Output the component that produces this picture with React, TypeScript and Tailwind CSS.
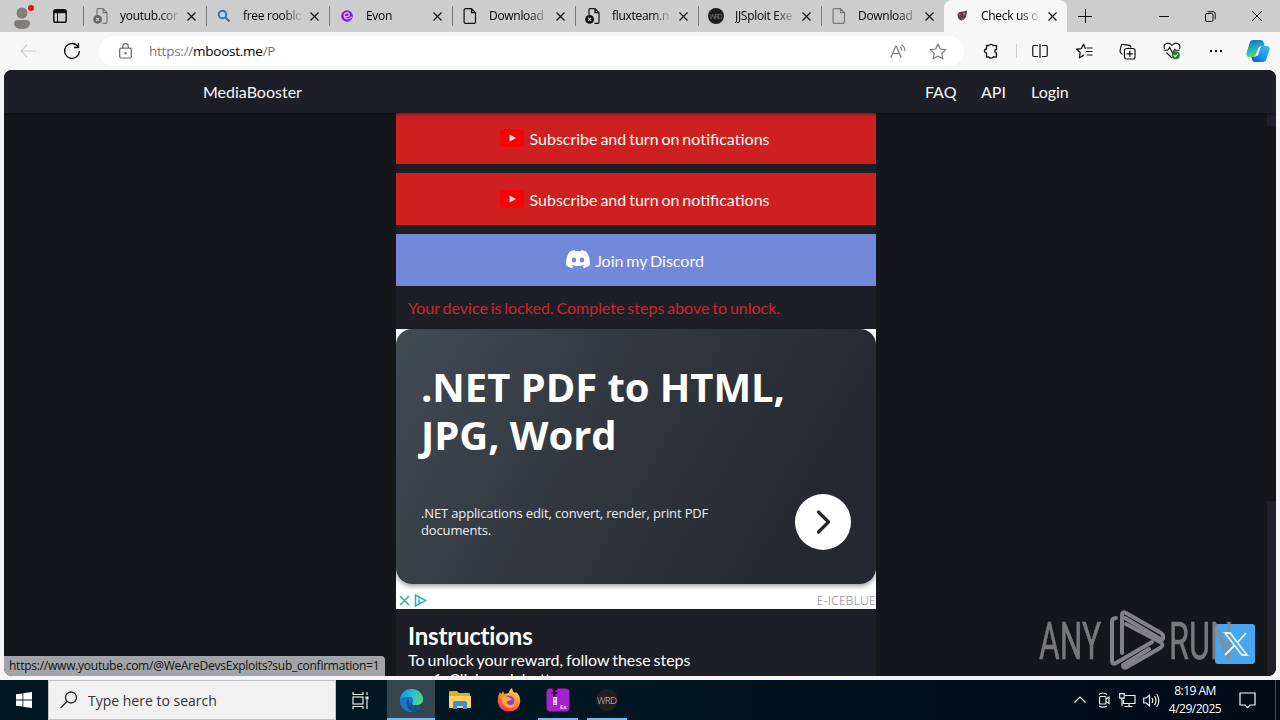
import type { ReactNode } from "react";
import clsx from "clsx";

type TabProps = {
  title: string;
  icon: ReactNode;
  active?: boolean;
};

function PageIcon({ muted, badge }: { muted?: boolean; badge?: boolean }) {
  return (
    <svg
      width="16"
      height="16"
      viewBox="0 0 16 16"
      fill="none"
      stroke={muted ? "#777" : "#111"}
      strokeWidth="1.2"
    >
      <path
        d={
          badge
            ? "M4 7V1.8Q4 .7 5 .7h5l4 4v9q0 1.6-1.3 1.6H9.5M10 .7v4h4"
            : "M4 .7h5.5l4 4v9q0 1.6-1.3 1.6H3.4q-1.3 0-1.3-1.3V2Q2.1.7 4 .7zM9.5.7v4h4"
        }
      />
      {badge && (
        <>
          <circle cx="4.6" cy="11.4" r="4.4" fill={muted ? "#666" : "#111"} stroke="none" />
          <path d="m3.1 9.9 3 3m0-3-3 3" stroke="#ccc" />
        </>
      )}
    </svg>
  );
}

function CloseIcon({ className }: { className?: string }) {
  return (
    <svg
      className={clsx("shrink-0", className)}
      width="9"
      height="9"
      viewBox="0 0 9 9"
      stroke="#111"
      strokeWidth="1.2"
    >
      <path d="m.5.5 8 8m0-8-8 8" />
    </svg>
  );
}

function SearchFavicon() {
  return (
    <svg width="16" height="16" viewBox="0 0 16 16" fill="none" stroke="#2474c8">
      <circle cx="6.5" cy="6.5" r="3.8" strokeWidth="1.9" />
      <path d="m9.5 9.5 4 4" strokeWidth="2.3" />
    </svg>
  );
}

function EvonFavicon() {
  return (
    <svg width="16" height="16" viewBox="0 0 16 16" fill="none">
      <circle cx="8" cy="8" r="5.8" fill="#8e16e0" />
      <path d="M5.2 8q2.400 1.500 5.200-.6Q10.500 4.800 8 4.700 5 5 5.200 8q.4 3 3.300 3 2.500 0 4.300-2.500" stroke="#dcbcf0" strokeWidth="1.2" />
    </svg>
  );
}

function WrdFavicon() {
  return (
    <svg width="16" height="16" viewBox="0 0 16 16">
      <circle cx="8" cy="8" r="8" fill="#1d1d1d" />
      <text x="1.5" y="10.6" textLength="13" fontSize="7" fill="#777" fontFamily="Open Sans, sans-serif">
        WRD
      </text>
    </svg>
  );
}

function BoostFavicon() {
  return (
    <svg width="16" height="16" viewBox="0 0 16 16">
      <path d="M3.500 6Q5 3 9 3.500L13 2.500l-.5 4Q12 11 8 12.500 3.500 12 3.500 6z" fill="#4b4650" />
      <path d="m4 5 3 1.500-2 1.500zM7 9l3 2-2.500 1.500z" fill="#c83a4d" />
      <path d="m9 5.500 2-1-1 3z" fill="#b9b4bd" />
    </svg>
  );
}

const tabs: TabProps[] = [
  { title: "youtub.cor", icon: <PageIcon muted badge /> },
  { title: "free rooblo", icon: <SearchFavicon /> },
  { title: "Evon", icon: <EvonFavicon /> },
  { title: "Download", icon: <PageIcon /> },
  { title: "fluxteam.n", icon: <PageIcon badge /> },
  { title: "JJSploit Exe", icon: <WrdFavicon /> },
  { title: "Download", icon: <PageIcon muted /> },
  { title: "Check us o", icon: <BoostFavicon />, active: true },
];

function Tab({ title, icon, active }: TabProps) {
  return (
    <div
      className={clsx(
        "flex h-8 w-[123px] shrink-0 items-center pl-[10px]",
        active
          ? "rounded-t-lg bg-[#f7f7f7]"
          : "bg-[linear-gradient(#777,#777)] bg-[length:1px_20px] bg-[position:0_6px] bg-no-repeat",
      )}
    >
      <span className="size-4 shrink-0">{icon}</span>
      <span className="ml-[11px] w-[58px] text-[12px] leading-4 tracking-[-0.3px] whitespace-nowrap text-black [mask-image:linear-gradient(90deg,#000_68%,#0003_98%)]">
        {title}
      </span>
      <CloseIcon className="ml-[9px]" />
    </div>
  );
}

function TabStrip() {
  return (
    <div className="flex h-8 items-center bg-[#cdcdcd]">
      <svg className="ml-3 shrink-0" width="24" height="26" viewBox="0 0 24 26">
        <circle cx="10" cy="10" r="5.5" fill="#817d7b" />
        <path d="M2 21q0-4 4-4h8q4 0 4 4-1 5-8 5t-8-5z" fill="#817d7b" />
        <circle cx="19" cy="5" r="3" fill="#e3101c" />
      </svg>
      <svg className="ml-[17px] shrink-0" width="14" height="14" viewBox="0 0 14 14">
        <rect x=".8" y=".8" width="12.4" height="12.4" rx="1.8" fill="none" stroke="#111" strokeWidth="1.5" />
        <path d="M1 1h12v3.2H1z" fill="#111" />
        <path d="M4.5 4v9" stroke="#111" />
      </svg>
      <div className="ml-4 flex">
        {tabs.map((tab, i) => (
          <Tab key={i} {...tab} />
        ))}
      </div>
      <svg className="ml-[11px] shrink-0" width="14" height="14" viewBox="0 0 14 14" stroke="#111">
        <path d="M7.5 0v14M0 7.5h14" />
      </svg>
      <div className="ml-auto flex items-center gap-9 pr-[18px]">
        <svg width="10" height="10" stroke="#111">
          <path d="M0 5.5h10" />
        </svg>
        <svg width="11" height="11" viewBox="0 0 11 11" fill="none" stroke="#111">
          <rect x=".5" y="2.5" width="7.5" height="8" rx="1.5" />
          <path d="M2.5.7h5.7q2 0 2 2v5.6" />
        </svg>
        <svg width="10" height="10" stroke="#111">
          <path d="m0 0 10 10M10 0 0 10" />
        </svg>
      </div>
    </div>
  );
}

function CopilotIcon() {
  return (
    <svg className="shrink-0" width="24" height="24" viewBox="0 0 24 24">
      <defs>
        <linearGradient id="cop-a" x1="0" y1="0" x2="0.3" y2="1">
          <stop offset="0" stopColor="#1267c8" />
          <stop offset=".5" stopColor="#1fa9c4" />
          <stop offset="1" stopColor="#5bd672" />
        </linearGradient>
        <linearGradient id="cop-b" x1="1" y1="0" x2="0" y2="1">
          <stop offset="0" stopColor="#45b6f4" />
          <stop offset=".6" stopColor="#168fe8" />
          <stop offset="1" stopColor="#0b50c8" />
        </linearGradient>
      </defs>
      <path d="M7 1h8q2.2 0 3 3l.6 3H16q-2.5 0-3.4 3l-1.5 5Q10 18 7 18H4q-4.5 0-3.3-4.5L3.5 4Q4.5 1 7 1z" fill="url(#cop-a)" />
      <path d="M17 23H9q-2.2 0-3-2.5L5.4 18H8q2.5 0 3.4-3l1.5-5Q14 7 17 7h3q4.5 0 3.4 4l-2.9 9Q19.5 23 17 23z" fill="url(#cop-b)" />
      <path d="m12.7 8.5 2.2-.9-2.9 8.7-2.7 1z" fill="#f4fbff" />
    </svg>
  );
}

function Toolbar() {
  return (
    <div className="flex h-[38px] items-center bg-[#f7f7f7]">
      <svg className="ml-5 shrink-0" width="16" height="14" viewBox="0 0 16 14" fill="none" stroke="#ccc" strokeWidth="1.2">
        <path d="M16 7H1m6-6L1 7l6 6" />
      </svg>
      <svg className="ml-[27px] shrink-0" width="18" height="18" viewBox="0 0 18 18" fill="none" stroke="#111" strokeWidth="1.3">
        <path d="M15.3 5A7.4 7.4 0 1 0 16.4 9M15.5 1v4.5H11" />
      </svg>
      <div className="ml-[18px] flex h-[30px] w-[865px] shrink-0 items-center rounded-full bg-white">
        <svg className="ml-[20px]" width="13" height="16" viewBox="0 0 13 16" fill="none" stroke="#666" strokeWidth="1.2">
          <rect x=".7" y="5.2" width="11.6" height="9.8" rx="1.5" />
          <path d="M3.7 5V3.5a2.8 2.8 0 0 1 5.6 0V5" />
          <circle cx="6.5" cy="10.2" r=".6" fill="#666" />
        </svg>
        <span className="ml-[17px] text-[13.5px] tracking-[-0.25px] text-[#777]">
          https://<span className="text-black">mboost.me</span>/P
        </span>
        <svg className="ml-auto" width="16" height="15" viewBox="0 0 16 15" fill="none" stroke="#777" strokeWidth="1.1">
          <path d="M.7 14 5.7 2h.6l5 12M2.500 9.500h7M10 3q2 1 2 3.500M11.500.7Q15 2.500 14.800 7" />
        </svg>
        <svg className="mr-[17px] ml-[23px]" width="18" height="17" viewBox="0 0 18 17" fill="none" stroke="#777" strokeWidth="1.2" strokeLinejoin="round">
          <path d="m9 1 2.3 5 5.5.6-4 3.8 1 5.4L9 13.1l-4.8 2.7 1-5.4-4-3.8 5.5-.6z" />
        </svg>
      </div>
      <svg className="ml-[19px] shrink-0" width="16" height="16" viewBox="0 0 16 16" fill="none" stroke="#111" strokeWidth="1.3" strokeLinejoin="round">
        <path d="M3.500 2.500H6a2.200 2 0 0 1 4 0h3.500v4a1.700 1.700 0 0 0 0 3.500v4H10a2.200 2 0 0 1-4 0H3.500v-4a2 2 0 1 1 0-4z" />
      </svg>
      <div className="ml-[17px] h-[14px] w-px shrink-0 bg-[#ccc]" />
      <svg className="ml-[15px] shrink-0" width="16" height="14" viewBox="0 0 16 14" fill="none" stroke="#111" strokeWidth="1.2">
        <path d="M6 1.500H2q-1.200 0-1.200 1.200v8.600Q.8 12.500 2 12.500h4m4-11h4q1.200 0 1.200 1.200v8.600q0 1.200-1.200 1.200h-4M8 0v14" />
      </svg>
      <svg className="ml-[28px] shrink-0" width="17" height="16" viewBox="0 0 17 16" fill="none" stroke="#111" strokeWidth="1.2" strokeLinejoin="round">
        <path d="M9.500 6 7.500 1.200 5.200 5.600.7 6.200 4.200 9.500l-.8 5.300L8 12M10.500 5h6M10 8.500h6.500M11 12h5.500" />
      </svg>
      <svg className="ml-[26px] shrink-0" width="17" height="17" viewBox="0 0 17 17" fill="none" stroke="#111" strokeWidth="1.2">
        <path d="M3.500 11.500Q1 10 1 8L2 3q.4-1.800 2.200-1.600l6.300 1q1.500.4 1.500 2" />
        <rect x="5.5" y="5.5" width="10.5" height="10.5" rx="2" />
        <path d="M10.800 7.800v6M7.800 10.800h6" />
      </svg>
      <svg className="ml-[27px] shrink-0" width="18" height="18" viewBox="0 0 18 18" fill="none" stroke="#111" strokeWidth="1.1">
        <path d="M1.500 7C-.5 1 6-.7 9 3.500 12-.7 18.500 1 16.500 7M3.500 10.500 9 16M.7 8.300h4l2-3 3 6 2-4 1 1h4" />
        <circle cx="12.8" cy="13.2" r="4" fill="#238020" stroke="none" />
        <path d="m10.800 13.200 1.400 1.400 2.800-2.800" stroke="#fff" />
      </svg>
      <svg className="ml-[28px] shrink-0" width="14" height="4" viewBox="0 0 14 4" fill="#111">
        <circle cx="2" cy="2" r="1.2" />
        <circle cx="7" cy="2" r="1.2" />
        <circle cx="12" cy="2" r="1.2" />
      </svg>
      <div className="ml-[23px]">
        <CopilotIcon />
      </div>
    </div>
  );
}

function SiteNav() {
  return (
    <nav className="relative flex h-[43px] shrink-0 items-center bg-[#1e1f26] pl-[199px] text-[#f6f6f7] shadow-[0_1px_3px_#0007]">
      <span className="w-[722px]">MediaBooster</span>
      <span className="w-14">FAQ</span>
      <span className="w-[50px]">API</span>
      <span>Login</span>
    </nav>
  );
}

function YoutubeLogo() {
  return (
    <svg width="24" height="18" viewBox="0 0 24 18">
      <rect width="24" height="18" rx="4" fill="#fb0007" />
      <path d="m9.500 5.500 6.500 3.500-6.500 3.500z" fill="#ffe9e6" />
    </svg>
  );
}

function DiscordLogo() {
  return (
    <svg width="24" height="19" viewBox="0 0 24 19" fill="#fff">
      <path
        fillRule="evenodd"
        d="M20.300 1.600A20 20 0 0 0 15.400 0l-.7 1.300a18 18 0 0 0-5.400 0L8.600 0a20 20 0 0 0-4.900 1.600C.6 6.200-.3 10.700.1 15.200a20 20 0 0 0 6 3.100l1.300-2.100-2-1 .5-.4c3.900 1.900 8.200 1.900 12.100 0l.5.4-2 1 1.300 2.100a20 20 0 0 0 6-3.100c.6-5.200-.8-9.700-3.500-13.600zM8 12.500c-1.200 0-2.200-1.100-2.200-2.500S6.800 7.600 8 7.600s2.200 1.100 2.200 2.400S9.200 12.500 8 12.500zm8 0c-1.200 0-2.200-1.100-2.200-2.500S14.800 7.600 16 7.600s2.200 1.100 2.200 2.400-1 2.500-2.200 2.500z"
      />
    </svg>
  );
}

type StepProps = {
  label: string;
  icon: ReactNode;
  className: string;
};

function StepButton({ label, icon, className }: StepProps) {
  return (
    <button
      type="button"
      className={clsx(
        "flex w-full shrink-0 items-center justify-center gap-[5px] pt-[1px] pr-[2px] text-[#fff8f2] [word-spacing:-1.2px]",
        className,
      )}
    >
      <span className="mb-[2px]">{icon}</span>
      <span>{label}</span>
    </button>
  );
}

function AdCard() {
  return (
    <div className="h-[280px] shrink-0 bg-white font-['Open_Sans',sans-serif]">
      <div className="h-[255px] rounded-2xl bg-[linear-gradient(120deg,#424a54_0%,#33383f_40%,#25282e_85%)] pt-[34px] pr-[25px] pl-[25px] text-white shadow-[0_2px_5px_#0006]">
        <h2 className="text-[40px] leading-[48px] font-bold tracking-[-0.06px] whitespace-nowrap">
          .NET PDF to HTML,
          <br />
          JPG, Word
        </h2>
        <div className="mt-[35px] flex items-center justify-between">
          <p className="w-[310px] text-[13px] leading-[17px] tracking-[-0.14px] text-[#eceef0]">
            .NET applications edit, convert, render, print PDF documents.
          </p>
          <div className="flex size-14 items-center justify-center rounded-full bg-white">
            <svg width="16" height="24" viewBox="0 0 16 24" fill="none" stroke="#22262a" strokeWidth="3.2" strokeLinecap="round" strokeLinejoin="round">
              <path d="m3.500 2 10 10-10 10" />
            </svg>
          </div>
        </div>
      </div>
      <div className="flex h-[25px] items-end pl-[3px]">
        <svg className="mb-[2px]" width="30" height="13" viewBox="0 0 30 13" fill="none" stroke="#22b2bd" strokeWidth="1.5">
          <path d="m1 2 9 9m0-9-9 9M16.500 1v11l10-5.500zM20 5.500v3.500M20 3.500v1" />
        </svg>
        <span className="ml-auto text-[12px] leading-[17px] font-light tracking-[0.3px] text-[#777]">
          E-ICEBLUE
        </span>
      </div>
    </div>
  );
}

function Watermark() {
  return (
    <svg
      className="absolute right-[20px] bottom-[4px]"
      width="220"
      height="64"
      viewBox="0 0 220 64"
      fill="none"
    >
      <rect x="179" y="16" width="40" height="40" rx="3" fill="#49a5ed" />
      <g
        fill="#8b8b8f"
        stroke="#8b8b8f"
        strokeWidth=".6"
        fontFamily="Roboto, sans-serif"
        fontSize="52"
        opacity=".85"
      >
        <text x="3" y="51" textLength="62" lengthAdjust="spacingAndGlyphs">
          ANY
        </text>
        <text x="133" y="51" textLength="64" lengthAdjust="spacingAndGlyphs">
          RUN
        </text>
      </g>
      <g stroke="#828286" strokeWidth="4" strokeLinejoin="round" strokeLinecap="round">
        <path d="M80 10q-4 0-4 4v39q0 4 4 2l36-21" />
        <path d="M86 45V7q0-4 4-2l35 20q4 3 1 7l-37-22" />
        <path d="m90 16 34 18q5 3 0 6L91 59q-4 2-4-2l26-16" />
      </g>
      <path
        d="M189 25h5l17 22h-5zM210 25l-9 10m-3 3-9 9"
        stroke="#e6f4ff"
        strokeWidth="1.8"
      />
    </svg>
  );
}

function Page() {
  return (
    <main className="relative mx-1 flex h-[606px] flex-col overflow-hidden rounded-lg bg-[#141619] font-[Lato,sans-serif] text-[16px]">
      <SiteNav />
      <div className="flex min-h-0 flex-1">
        <div className="ml-[392px] flex h-[563px] w-[480px] flex-col overflow-hidden bg-[#1e1f26]">
          <StepButton
            label="Subscribe and turn on notifications"
            icon={<YoutubeLogo />}
            className="h-[51px] bg-[#ce2020]"
          />
          <StepButton
            label="Subscribe and turn on notifications"
            icon={<YoutubeLogo />}
            className="mt-[9px] h-[52px] bg-[#ce2020]"
          />
          <StepButton
            label="Join my Discord"
            icon={<DiscordLogo />}
            className="mt-[9px] h-[52px] bg-[#7289da]"
          />
          <p className="flex h-[43px] shrink-0 items-center pl-3 text-[#ce2431] [word-spacing:-1.25px]">
            Your device is locked. Complete steps above to unlock.
          </p>
          <AdCard />
          <div className="shrink-0 pt-3 pl-3 text-white [word-spacing:-1.2px]">
            <h3 className="text-[24px] leading-[29px] font-bold tracking-[-0.2px]">
              Instructions
            </h3>
            <p className="leading-[19px]">To unlock your reward, follow these steps</p>
            <ol className="list-decimal pl-[41px] leading-[19px]">
              <li>Click each button</li>
            </ol>
          </div>
        </div>
        <div className="ml-auto flex w-[9px] flex-col bg-[#211f28]">
          <div className="mt-[13px] h-[375px] bg-[#17151a]" />
        </div>
      </div>
      <div className="absolute bottom-0 left-0 h-5 w-[381px] rounded-tr bg-[#a3a4a7] pl-[5px] font-['Open_Sans',sans-serif] text-[12px] leading-5 tracking-[-0.24px] whitespace-nowrap text-[#111]">
        https://www.youtube.com/@WeAreDevsExploits?sub_confirmation=1
      </div>
      <Watermark />
    </main>
  );
}

function EdgeIcon() {
  return (
    <svg width="25" height="25" viewBox="0 0 26 26">
      <defs>
        <linearGradient id="edge-top" x1="0" y1=".3" x2="1" y2=".6">
          <stop offset="0" stopColor="#178fdc" />
          <stop offset=".5" stopColor="#2bc0cf" />
          <stop offset="1" stopColor="#55d96d" />
        </linearGradient>
      </defs>
      <circle cx="13" cy="13" r="12" fill="#1578cb" />
      <path d="M1 12C2 4 8 1 13 1c8 0 12 6 12 10.500 0 5-4 6.500-8 6.500-3 0-4-1.200-3-2.500 2-2.500.5-6.500-3.500-6.500C5 9 1 11 1 12z" fill="url(#edge-top)" />
      <path d="M10 10c-5 6-1 13 5 15 4 0 7-2 8.500-4.500-6 3-14 0-13.500-10.500z" fill="#124f9b" />
      <path d="M14 15.500C13 17 14 18 17 18c3 0 6-.7 7.500-3.500 1 1.500.5 3.500-1 6-5 1.500-10 0-11-3-.5-2 .5-3.500 1.500-2z" fill="#34474e" />
    </svg>
  );
}

function ExplorerIcon() {
  return (
    <svg width="22" height="20" viewBox="0 0 22 20">
      <path d="M0 2q0-1 1-1h7l2 2h10q1 0 1 1v3H0z" fill="#e7a72a" />
      <path d="M0 6h22v11q0 1-1 1H1q-1 0-1-1z" fill="#fbd36a" />
      <path d="M4 19v-6q0-2 2-2h10q2 0 2 2v6h-4v-3H8v3z" fill="#3f8fcd" />
    </svg>
  );
}

function FirefoxIcon() {
  return (
    <svg width="24" height="24" viewBox="0 0 24 24">
      <defs>
        <linearGradient id="fox" x1=".8" y1="0" x2=".3" y2="1">
          <stop offset="0" stopColor="#ffe14d" />
          <stop offset=".5" stopColor="#ff8a2a" />
          <stop offset="1" stopColor="#f5285f" />
        </linearGradient>
      </defs>
      <path d="M3 4l1.500 2L6 3l1.500 3 4-1Q12 2 15 0q0 3 3 5l1-1q5 4 4 11-2 8.500-11 8.500T1 15Q0 9 3 4z" fill="url(#fox)" />
      <circle cx="12" cy="13" r="5.5" fill="#8a3fe0" />
      <path d="M5 9q4-2 8 1l2 1q-2 2-5 2-1 3 3 4 5 0 5-5 1 8-6 8-8-1-7-11z" fill="#ffad32" />
    </svg>
  );
}

function WinrarIcon() {
  return (
    <svg width="24" height="24" viewBox="0 0 24 24">
      <rect x=".5" y=".5" width="23" height="23" rx="4" fill="#a721cf" />
      <path d="M6.500 0h5v2h-2v2h2v2h-2v3h-2V6h-2V4h2V2h-1z" fill="#260b36" />
      <rect x="7" y="9" width="4" height="8" fill="#f4dff9" />
      <path d="M9 10.500v2m0 2v1.500" stroke="#7c1b9a" />
      <text x="14" y="21" fontSize="6" fontWeight="700" fill="#f4dff9" fontFamily="Open Sans, sans-serif">
        Ex
      </text>
    </svg>
  );
}

function WrdIcon() {
  return (
    <svg width="24" height="24" viewBox="0 0 24 24">
      <circle cx="12" cy="12" r="11" fill="#211e1e" />
      <text x="2" y="15.5" textLength="20" fontSize="9.5" fontWeight="300" fill="#ddd" fontFamily="Open Sans, sans-serif">
        WRD
      </text>
    </svg>
  );
}

function TaskbarApp({ icon, className }: { icon: ReactNode; className?: string }) {
  return (
    <div className={clsx("flex h-10 items-center justify-center", className)}>{icon}</div>
  );
}

function Taskbar() {
  return (
    <div className="flex h-10 items-center bg-[linear-gradient(90deg,#001822_0%,#001722_45%,#000e1c_75%,#020a17_100%)] text-white">
      <div className="flex w-12 shrink-0 justify-center">
        <svg width="16" height="16" viewBox="0 0 16 16" fill="#fff">
          <path d="m0 2.300 6.500-.9v6.200H0zM7.300 1.300 16 0v7.600H7.300zM0 8.400h6.500v6.200L0 13.700zM7.300 8.400H16V16l-8.700-1.300z" />
        </svg>
      </div>
      <div className="flex h-10 w-72 shrink-0 items-center border border-[#c4c4c4] bg-[#f1f1f1] pl-[11px] text-[#333]">
        <svg width="18" height="18" viewBox="0 0 18 18" fill="none" stroke="#222" strokeWidth="1.3">
          <circle cx="11" cy="6.5" r="5.5" />
          <path d="m7 10.500-6.500 6.500" />
        </svg>
        <span className="ml-[10px] text-[14px]">Type here to search</span>
      </div>
      <div className="flex w-[51px] shrink-0 justify-center pr-[2px]">
        <svg width="17" height="17" viewBox="0 0 17 17" fill="none" stroke="#e8e8e8" strokeWidth="1.2">
          <path d="M1 0v2.500h10V0M1 17v-2.500h10V17M15 0v3M15 8v9" />
          <rect x="1" y="5" width="10" height="7" />
          <path d="M15 4.500v3" strokeWidth="3" />
        </svg>
      </div>
      <TaskbarApp icon={<EdgeIcon />} className="w-12 border-b-2 border-[#76b9ed] bg-[#34474e] pt-[2px]" />
      <TaskbarApp icon={<ExplorerIcon />} className="w-[50px]" />
      <TaskbarApp icon={<FirefoxIcon />} className="w-12" />
      <TaskbarApp icon={<WinrarIcon />} className="ml-[5px] w-10 border-b-2 border-[#76b9ed] pt-[2px]" />
      <TaskbarApp icon={<WrdIcon />} className="ml-[9px] w-10 border-b-2 border-[#76b9ed] pt-[2px]" />
      <div className="ml-auto flex items-center">
        <svg width="12" height="8" viewBox="0 0 12 8" fill="none" stroke="#fff" strokeWidth="1.2">
          <path d="m.5 6.500 5.500-5.500 5.500 5.500" />
        </svg>
        <svg className="ml-[11px]" width="14" height="16" viewBox="0 0 14 16" fill="none" stroke="#eee" strokeWidth="1.2">
          <rect x="2.5" y="4.5" width="6.5" height="7.5" rx="1" />
          <path d="m9 7 3-2v6.500L9 9.500M2 2.500Q6-.5 10 2.500M2 14q4 2.400 8 0" />
        </svg>
        <svg className="ml-[8px]" width="17" height="15" viewBox="0 0 17 15" fill="none" stroke="#eee" strokeWidth="1.2">
          <path d="M6 2.500h10v8H4.500V7M5.500 13.500h8M10 10.500v3M.7.700h4.500v4.500H.7zM3 5v8" />
        </svg>
        <svg className="ml-[7px]" width="17" height="15" viewBox="0 0 17 15" fill="none" stroke="#eee" strokeWidth="1.2">
          <path d="M.7 5v5h2.500L6.500 13V2L3.200 5zM9 5q1.500 2.500 0 5M11.500 3q3 4.500 0 9M13.700 1q4.300 6.500 0 13" />
        </svg>
        <div className="ml-[6px] w-[58px] text-center text-[12px] leading-[18px] tracking-[-0.5px] whitespace-nowrap">
          8:19 AM
          <br />
          4/29/2025
        </div>
        <svg className="ml-[15px]" width="17" height="17" viewBox="0 0 17 17" fill="none" stroke="#fff" strokeWidth="1.2">
          <path d="M1 1h15v12h-5l-2.500 2.700L6 13H1z" />
        </svg>
        <div className="ml-[19px] h-10 w-px bg-[#4a515c]" />
        <div className="w-1" />
      </div>
    </div>
  );
}

export default function App() {
  return (
    <div className="h-[720px] w-[1280px] overflow-hidden bg-[#f5f5f8] font-['Open_Sans',sans-serif]">
      <TabStrip />
      <Toolbar />
      <Page />
      <div className="h-1" />
      <Taskbar />
    </div>
  );
}
